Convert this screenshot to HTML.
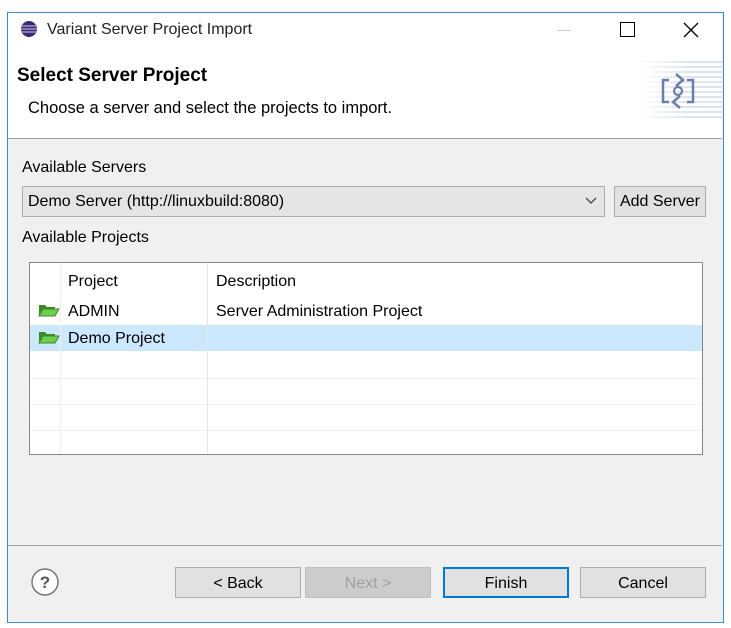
<html><head><style>
body{margin:0;width:731px;height:628px;background:#fff;font-family:"Liberation Sans",sans-serif;font-size:16px;color:#000;position:relative;overflow:hidden}
.a{position:absolute}
.win{left:7px;top:12px;width:715px;height:609px;border:1px solid #3c8ad8;background:#f0f0f0}
.btn{position:absolute;top:567px;height:31px;border:1px solid #adadad;background:#e1e1e1;text-align:center;line-height:31px;box-sizing:border-box;font-size:16px}
.hl{position:absolute;left:30px;width:672px;height:1px;background:#f0f0f0}
</style></head><body>
<div class="a win"></div>
<div class="a" style="left:8px;top:13px;width:714px;height:125px;background:#fff;border-bottom:1px solid #a0a0a0"></div>
<svg class="a" style="left:20px;top:20px" width="18" height="18"><circle cx="9" cy="9" r="8" fill="#3b2a6e"/><path d="M1 6h16M1 9h16M1 12h16" stroke="#b9a8e0" stroke-width="1.2"/></svg>
<div class="a" style="left:47px;top:21px;font-size:16px;color:#222">Variant Server Project Import</div>
<div class="a" style="left:557px;top:30px;width:14px;height:1px;background:#ccc"></div>
<div class="a" style="left:620px;top:22px;width:13px;height:13px;border:1.3px solid #000"></div>
<svg class="a" style="left:683px;top:22px" width="16" height="16"><path d="M1 1L15 15M15 1L1 15" stroke="#000" stroke-width="1.3"/></svg>
<div class="a" style="left:17px;top:65px;font-size:19px;font-weight:bold">Select Server Project</div>
<div class="a" style="left:28px;top:99px;font-size:16.5px">Choose a server and select the projects to import.</div>
<div class="a" style="left:640px;top:58px;width:82px;height:62px;background:repeating-linear-gradient(#fff 0 3px,#dde4ee 3px 5px);-webkit-mask:linear-gradient(90deg,transparent,#000 60%)"></div>
<svg class="a" style="left:660px;top:66px" width="36" height="50"><path d="M9 14H3v22h6M16 8l7 6-7 6M27 14h6v22h-6M20 42l-7-6 7-6" fill="none" stroke="#6b7fa8" stroke-width="2.5"/><circle cx="18" cy="25" r="4" fill="none" stroke="#6b7fa8" stroke-width="2.2"/></svg>
<div class="a" style="left:22px;top:159px">Available Servers</div>
<div class="a" style="left:22px;top:186px;width:583px;height:31px;box-sizing:border-box;border:1px solid #adadad;background:#e5e5e5"></div>
<div class="a" style="left:28px;top:193px">Demo Server (http://linuxbuild:8080)</div>
<svg class="a" style="left:585px;top:197px" width="12" height="8"><path d="M1 1l5 5 5-5" fill="none" stroke="#444" stroke-width="1.3"/></svg>
<div class="btn" style="left:614px;top:186px;width:92px;height:31px;line-height:29px">Add Server</div>
<div class="a" style="left:22px;top:229px">Available Projects</div>
<div class="a" style="left:29px;top:262px;width:674px;height:193px;box-sizing:border-box;border:1px solid #828790;background:#fff"></div>
<div class="a" style="left:30px;top:325px;width:672px;height:26px;background:#cce8ff"></div>
<div class="hl" style="top:378px"></div><div class="hl" style="top:404px"></div><div class="hl" style="top:430px"></div>
<div class="a" style="left:60px;top:263px;width:1px;height:191px;background:#f0f0f0"></div>
<div class="a" style="left:207px;top:263px;width:1px;height:191px;background:#e5e5e5"></div>
<div class="a" style="left:68px;top:273px">Project</div>
<div class="a" style="left:216px;top:273px">Description</div>
<div class="a" style="left:68px;top:303px">ADMIN</div>
<div class="a" style="left:216px;top:303px">Server Administration Project</div>
<div class="a" style="left:68px;top:330px">Demo Project</div>
<svg class="a" style="left:38px;top:303px" width="22" height="14"><path d="M1 2h6l2 2h8v3H5L1 13z" fill="#3d8a2a"/><path d="M5 6h16l-4 7H1z" fill="#6ccf4e" stroke="#3d8a2a"/></svg>
<svg class="a" style="left:38px;top:330px" width="22" height="14"><path d="M1 2h6l2 2h8v3H5L1 13z" fill="#3d8a2a"/><path d="M5 6h16l-4 7H1z" fill="#6ccf4e" stroke="#3d8a2a"/></svg>
<div class="a" style="left:8px;top:545px;width:714px;height:1px;background:#a0a0a0"></div>
<svg class="a" style="left:30px;top:567px" width="30" height="30"><circle cx="15" cy="15" r="13" fill="#fff" stroke="#777" stroke-width="1.5"/><text x="15" y="21" font-size="17" font-weight="bold" text-anchor="middle" fill="#555" font-family="Liberation Sans">?</text></svg>
<div class="btn" style="left:175px;width:126px">&lt; Back</div>
<div class="btn" style="left:305px;width:126px;color:#a0a0a0;background:#ccc;border-color:#bfbfbf">Next &gt;</div>
<div class="btn" style="left:443px;width:126px;border:2px solid #0078d7;line-height:29px">Finish</div>
<div class="btn" style="left:580px;width:126px">Cancel</div>
</body></html>
